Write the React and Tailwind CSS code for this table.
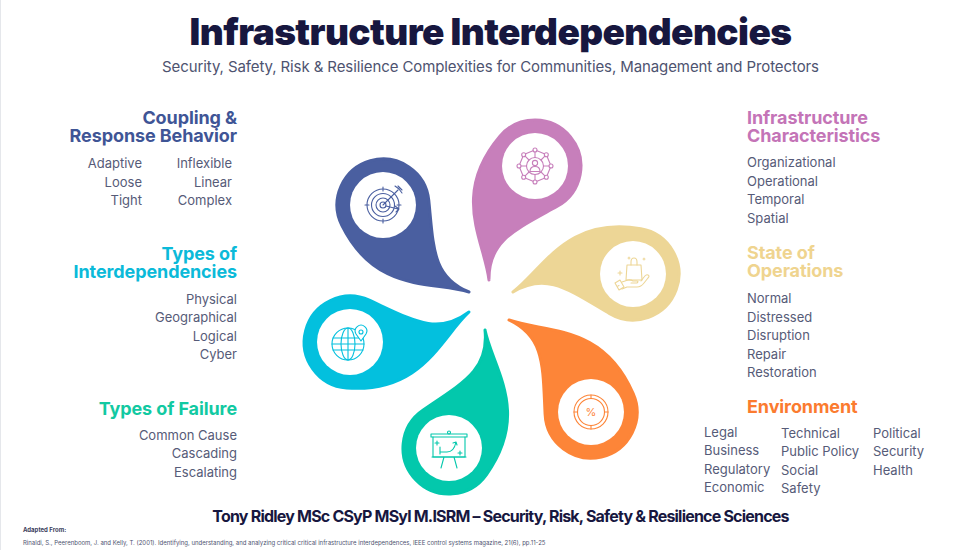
import React from "react";

const FONT = { fontFamily: "Inter, 'Noto Sans', sans-serif" };

const rot = (v, a) => [
  v[0] * Math.cos(a) - v[1] * Math.sin(a),
  v[0] * Math.sin(a) + v[1] * Math.cos(a),
];

// teardrop with a curled tail, head at C, tip at T
const petalPath = (C, T, R, phi1 = 0.5, phi2 = 0.45) => {
  const dx = T[0] - C[0];
  const dy = T[1] - C[1];
  const L = Math.hypot(dx, dy);
  const u = [dx / L, dy / L];
  const w0 = rot(u, phi1);
  const w1 = rot(u, -phi2);
  const r0 = [-w0[1], w0[0]];
  const r1 = [-w1[1], w1[0]];
  const al = 0.18;
  const ca = Math.cos(al);
  const sa = Math.sin(al);
  const Pr = [C[0] + R * (r0[0] * ca + w0[0] * sa), C[1] + R * (r0[1] * ca + w0[1] * sa)];
  const Pl = [C[0] + R * (-r0[0] * ca + w0[0] * sa), C[1] + R * (-r0[1] * ca + w0[1] * sa)];
  const tr = [w0[0] * ca - r0[0] * sa, w0[1] * ca - r0[1] * sa];
  const tl = [w0[0] * ca + r0[0] * sa, w0[1] * ca + r0[1] * sa];
  const tw = 2;
  const c1 = [Pr[0] + tr[0] * 0.62 * L, Pr[1] + tr[1] * 0.62 * L];
  const c2 = [T[0] - w1[0] * 0.32 * L + r1[0] * tw, T[1] - w1[1] * 0.32 * L + r1[1] * tw];
  const c3 = [T[0] - w1[0] * 0.32 * L - r1[0] * tw, T[1] - w1[1] * 0.32 * L - r1[1] * tw];
  const c4 = [Pl[0] + tl[0] * 0.4 * L, Pl[1] + tl[1] * 0.4 * L];
  const f = (p) => `${p[0].toFixed(1)} ${p[1].toFixed(1)}`;
  return `M ${f(Pr)} C ${f(c1)} ${f(c2)} ${f(T)} C ${f(c3)} ${f(c4)} ${f(Pl)} A ${R} ${R} 0 1 0 ${f(Pr)} Z`;
};

const petals = [
  { c: [382, 205], t: [468, 292], color: "#4a5fa0", icon: "target" },
  { c: [534, 166], t: [488, 280], color: "#c77fbb", icon: "network" },
  { c: [632, 274], t: [512, 292], color: "#edd696", icon: "bag" },
  { c: [590, 412], t: [508, 320], color: "#fd8538", icon: "percent" },
  { c: [448, 448], t: [484, 330], color: "#03c8ac", icon: "board" },
  { c: [349, 342], t: [468, 312], color: "#03c0de", icon: "globe" },
];

const Icon = ({ type, color }) => {
  const s = { fill: "none", stroke: color, strokeWidth: 1.1, strokeLinecap: "round", strokeLinejoin: "round" };
  if (type === "target")
    return (
      <g {...s}>
        <circle r="16" />
        <circle r="11.5" />
        <circle r="7" />
        <circle r="3" />
        <path d="M0 -18 V-14 M-18 0 H-14 M0 14 V18 M14 0 H18" />
        <path d="M0 0 L15 -15 M12 -19 L16 -16 L19 -12 M15 -19 L17 -17 M19 -15 L17 -17" />
        <path d="M3 1 L15 4 M12 1 L16 4 L13 7" />
      </g>
    );
  if (type === "network") {
    const nodes = [...Array(8)].map((_, i) => {
      const a = (i * Math.PI) / 4 - Math.PI / 2;
      return [Math.cos(a) * 16, Math.sin(a) * 16, a];
    });
    return (
      <g {...s}>
        <circle r="8.5" />
        <circle cx="0" cy="-3" r="2.6" />
        <path d="M-5 5.5 Q-5 0.5 0 0.5 Q5 0.5 5 5.5 Z" />
        {nodes.map(([x, y, a], i) => {
          const n = nodes[(i + 1) % 8];
          return (
            <g key={i}>
              <circle cx={x} cy={y} r="2" fill="#fff" />
              <path d={`M${(Math.cos(a) * 8.5).toFixed(1)} ${(Math.sin(a) * 8.5).toFixed(1)} L${(Math.cos(a) * 14).toFixed(1)} ${(Math.sin(a) * 14).toFixed(1)}`} />
              <path d={`M${(x + (n[0] - x) * 0.18).toFixed(1)} ${(y + (n[1] - y) * 0.18).toFixed(1)} L${(x + (n[0] - x) * 0.82).toFixed(1)} ${(y + (n[1] - y) * 0.82).toFixed(1)}`} />
            </g>
          );
        })}
      </g>
    );
  }
  if (type === "bag")
    return (
      <g {...s}>
        <path d="M-6 -9 H8 L9 6 H-7 Z" />
        <path d="M-2 -9 V-12 Q-2 -16 1 -16 Q4 -16 4 -12 V-9" />
        <path d="M-13 -3 V1 M-15 -1 H-11 M-4 -17 V-15 M-5 -16 H-3 M11 -16 V-14 M10 -15 H12" />
        <path d="M-11 8 L-5 6 Q-2 5.5 0 7 L4 7 Q6 7.5 4 9 L-2 9 M-11 15 L-6 13 H4 Q8 13 11 9 L15 4 Q17 2 15 1 Q13 0 11 3 L8 7" />
        <path d="M-18 9 L-13 6 L-9 13 L-14 16 Z M-15 12 L-14 11.5" />
      </g>
    );
  if (type === "percent")
    return (
      <g>
        <g {...s}>
          <circle r="17" />
          <circle r="13.5" />
          <path d="M0 -17 V-13.5 M0 13.5 V17 M-17 0 H-13.5 M13.5 0 H17" />
        </g>
        <text x="0" y="4" textAnchor="middle" fontSize="11" fill={color} style={FONT}>%</text>
      </g>
    );
  if (type === "board")
    return (
      <g {...s}>
        <path d="M-18 -14 H18 V-11 H-18 Z" />
        <circle cx="0" cy="-15.5" r="1.5" />
        <path d="M-16 -11 V9 H16 V-11" />
        <path d="M-17 9 H17 M-5 9 L-8 20 M5 9 L8 20" />
        <path d="M-12 -7 V-3 M-14 -5 H-10 M11 3 V7 M9 5 H13" />
        <path d="M-9 6 V-1 M-9 4 H-2 Q5 4 7 -6 M4 -5 L7 -6 L8 -3" />
      </g>
    );
  return (
    <g {...s}>
      <circle cx="-2" cy="2" r="16" />
      <ellipse cx="-2" cy="2" rx="7" ry="16" />
      <path d="M-2 -14 V18 M-17 -4 H13 M-18 2 H14 M-17 8 H13" />
      <path d="M11 -1 L6 -8 A5.8 5.8 0 1 1 16 -8 Z" fill="#fff" />
      <circle cx="11" cy="-10" r="2" />
    </g>
  );
};

const Diagram = () => (
  <svg width="510" height="397" viewBox="236 109 510 397" className="overflow-visible">
    {petals.map((p, i) => (
      <g key={i}>
        <path d={petalPath(p.c, p.t, 46)} fill={p.color} stroke={p.color} strokeWidth="3" strokeLinejoin="round" />
        <circle cx={p.c[0]} cy={p.c[1]} r="33" fill="#fff" />
        <g transform={`translate(${p.c[0]} ${p.c[1]})`}>
          <Icon type={p.icon} color={p.color} />
        </g>
      </g>
    ))}
  </svg>
);

const Heading = ({ color, children, className = "" }) => (
  <h3 className={`text-[18px] leading-[18px] font-bold tracking-[-0.1px] ${color} ${className}`}>{children}</h3>
);

const Items = ({ list, className = "" }) => (
  <ul className={`text-[13px] leading-[18.5px] text-[#565b78] ${className}`}>
    {list.map((x) => (
      <li key={x}>{x}</li>
    ))}
  </ul>
);

export default function App() {
  return (
    <div className="w-[980px] h-[550px] bg-white border-l border-gray-200 overflow-hidden" style={FONT}>
      <header className="pt-[12px] text-center">
        <h1 className="text-[37px] leading-[40px] font-black tracking-[-0.6px] text-[#17173f]">
          Infrastructure Interdependencies
        </h1>
        <p className="mt-[5px] text-[15px] leading-[20px] tracking-[-0.1px] text-[#4e5370]">
          Security, Safety, Risk &amp; Resilience Complexities for Communities, Management and Protectors
        </p>
      </header>

      <main className="mt-[32px] flex h-[397px]">
        {/* left column */}
        <div className="w-[236px] shrink-0 text-right">
          <Heading color="text-[#3f5596]">
            Coupling &amp;
            <br />
            Response Behavior
          </Heading>
          <div className="mt-[9px] grid grid-cols-[141px_90px]">
            <Items list={["Adaptive", "Loose", "Tight"]} />
            <Items list={["Inflexible", "Linear", "Complex"]} />
          </div>

          <Heading color="text-[#0bbad9]" className="mt-[35px]">
            Types of
            <br />
            Interdependencies
          </Heading>
          <Items className="mt-[9px]" list={["Physical", "Geographical", "Logical", "Cyber"]} />

          <Heading color="text-[#12c9a2]" className="mt-[36px]">
            Types of Failure
          </Heading>
          <Items className="mt-[8px]" list={["Common Cause", "Cascading", "Escalating"]} />
        </div>

        {/* centre diagram */}
        <div className="w-[510px] shrink-0">
          <Diagram />
        </div>

        {/* right column */}
        <div className="flex-1">
          <Heading color="text-[#c474b7]">
            Infrastructure
            <br />
            Characteristics
          </Heading>
          <Items className="mt-[8px]" list={["Organizational", "Operational", "Temporal", "Spatial"]} />

          <Heading color="text-[#efd48f]" className="mt-[17px]">
            State of
            <br />
            Operations
          </Heading>
          <Items className="mt-[9px]" list={["Normal", "Distressed", "Disruption", "Repair", "Restoration"]} />

          <Heading color="text-[#fb7b2f]" className="mt-[16px]">
            Environment
          </Heading>
          <div className="mt-[8px] -ml-[43px] grid grid-cols-[77px_92px_auto]">
            <Items className="-mt-[1px]" list={["Legal", "Business", "Regulatory", "Economic"]} />
            <Items list={["Technical", "Public Policy", "Social", "Safety"]} />
            <Items list={["Political", "Security", "Health"]} />
          </div>
        </div>
      </main>

      <footer>
        <p className="pl-[20px] text-center text-[16px] leading-[20px] font-bold tracking-[-0.8px] text-[#17173f]">
          Tony Ridley MSc CSyP MSyl M.ISRM – Security, Risk, Safety &amp; Resilience Sciences
        </p>
        <p className="pl-[22px] text-[6px] leading-[8px] font-bold text-[#3b405c]">Adapted From:</p>
        <p className="mt-[5px] pl-[22px] text-[6px] leading-[8px] text-[#4e5370]">
          Rinaldi, S., Peerenboom, J. and Kelly, T. (2001). Identifying, understanding, and analyzing critical critical
          infrastructure interdependences, IEEE control systems magazine, 21(6), pp.11-25
        </p>
      </footer>
    </div>
  );
}
